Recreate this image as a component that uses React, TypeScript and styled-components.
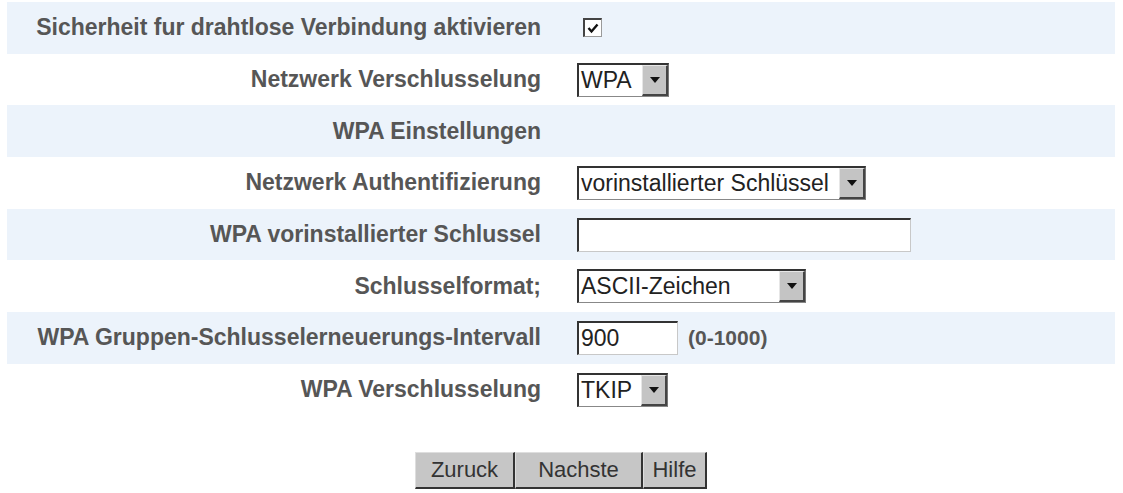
import React from 'react';
import styled, {createGlobalStyle} from 'styled-components';

const GlobalStyle = createGlobalStyle`
  body {
    margin: 0;
    background: #ffffff;
    font-family: "Liberation Sans", Arial, sans-serif;
  }
`

const Page = styled.div`
  padding: 2px 8px 0 7px;
`

const Form = styled.div`
  display: flex;
  flex-direction: column;
`

const Row = styled.div<{ $shaded?: boolean }>`
  display: grid;
  grid-template-columns: 534px 1fr;
  column-gap: 36px;
  align-items: center;
  height: 51.7px;
  background: ${({$shaded}) => ($shaded ? '#ecf3fb' : 'transparent')};
`

const Label = styled.div`
  text-align: right;
  font-size: 23px;
  font-weight: 700;
  color: #565656;
  white-space: nowrap;
`

const Controls = styled.div`
  display: flex;
  align-items: center;
  gap: 8px;
`

const CheckBox = styled.span`
  display: inline-flex;
  align-items: center;
  justify-content: center;
  box-sizing: border-box;
  width: 19px;
  height: 19px;
  margin-left: 6px;
  background: #fff;
  border-top: 2px solid #444;
  border-left: 2px solid #444;
  border-right: 1px solid #9a9a9a;
  border-bottom: 1px solid #9a9a9a;
`

const SelectBox = styled.div<{ $width: number }>`
  display: inline-flex;
  box-sizing: border-box;
  width: ${({$width}) => $width}px;
  height: 34px;
  background: #fff;
  border-top: 2px solid #333;
  border-left: 2px solid #333;
  border-right: 1px solid #777;
  border-bottom: 1px solid #888;
`

const SelectValue = styled.span`
  flex: 1;
  padding-left: 2px;
  font-size: 23px;
  line-height: 31px;
  color: #222;
  white-space: nowrap;
  overflow: hidden;
`

const ArrowButton = styled.span`
  display: flex;
  align-items: center;
  justify-content: center;
  box-sizing: border-box;
  width: 26px;
  background: #c4c4c4;
  border-top: 1px solid #e6e6e6;
  border-left: 1px solid #e6e6e6;
  border-right: 2px solid #444;
  border-bottom: 2px solid #444;

  &::after {
    content: '';
    border-left: 5px solid transparent;
    border-right: 5px solid transparent;
    border-top: 6px solid #111;
  }
`

const TextField = styled.input<{ $width: number }>`
  box-sizing: border-box;
  width: ${({$width}) => $width}px;
  height: 34px;
  padding: 0 2px;
  background: #fff;
  border: none;
  border-top: 2px solid #333;
  border-left: 2px solid #333;
  border-right: 1px solid #c8c8c8;
  border-bottom: 1px solid #c8c8c8;
  font-family: "Liberation Sans", Arial, sans-serif;
  font-size: 23px;
  color: #222;
  outline: none;
`

const Hint = styled.span`
  font-size: 21px;
  font-weight: 700;
  color: #565656;
  margin-left: 2px;
`

const ButtonBar = styled.div`
  display: flex;
  justify-content: center;
  margin-top: 36px;
`

const Button = styled.button<{ $width: number }>`
  box-sizing: border-box;
  width: ${({$width}) => $width}px;
  height: 37px;
  padding: 0;
  background: #c6c6c6;
  border: none;
  border-top: 1px solid #dedede;
  border-left: 1px solid #dedede;
  border-right: 2px solid #333;
  border-bottom: 2px solid #333;
  font-family: "Liberation Sans", Arial, sans-serif;
  font-size: 22px;
  color: #333;
`

const Select = ({value, width}: { value: string, width: number }) => (
    <SelectBox $width={width}>
        <SelectValue>{value}</SelectValue>
        <ArrowButton/>
    </SelectBox>
)

function App() {
    return (
        <>
            <GlobalStyle/>
            <Page>
                <Form>
                    <Row $shaded>
                        <Label>Sicherheit fur drahtlose Verbindung aktivieren</Label>
                        <Controls>
                            <CheckBox>
                                <svg width="12" height="11" viewBox="0 0 12 11">
                                    <path d="M1.5 5 L4.5 8.5 L10.5 1.5" fill="none" stroke="#111" strokeWidth="2.4"/>
                                </svg>
                            </CheckBox>
                        </Controls>
                    </Row>
                    <Row>
                        <Label>Netzwerk Verschlusselung</Label>
                        <Controls><Select value="WPA" width={92}/></Controls>
                    </Row>
                    <Row $shaded>
                        <Label>WPA Einstellungen</Label>
                    </Row>
                    <Row>
                        <Label>Netzwerk Authentifizierung</Label>
                        <Controls><Select value="vorinstallierter Schlüssel" width={289}/></Controls>
                    </Row>
                    <Row $shaded>
                        <Label>WPA vorinstallierter Schlussel</Label>
                        <Controls><TextField $width={334} defaultValue=""/></Controls>
                    </Row>
                    <Row>
                        <Label>Schlusselformat;</Label>
                        <Controls><Select value="ASCII-Zeichen" width={229}/></Controls>
                    </Row>
                    <Row $shaded>
                        <Label>WPA Gruppen-Schlusselerneuerungs-Intervall</Label>
                        <Controls>
                            <TextField $width={101} defaultValue="900"/>
                            <Hint>(0-1000)</Hint>
                        </Controls>
                    </Row>
                    <Row>
                        <Label>WPA Verschlusselung</Label>
                        <Controls><Select value="TKIP" width={91}/></Controls>
                    </Row>
                </Form>
                <ButtonBar>
                    <Button $width={100}>Zuruck</Button>
                    <Button $width={128}>Nachste</Button>
                    <Button $width={64}>Hilfe</Button>
                </ButtonBar>
            </Page>
        </>
    );
}

export default App;
